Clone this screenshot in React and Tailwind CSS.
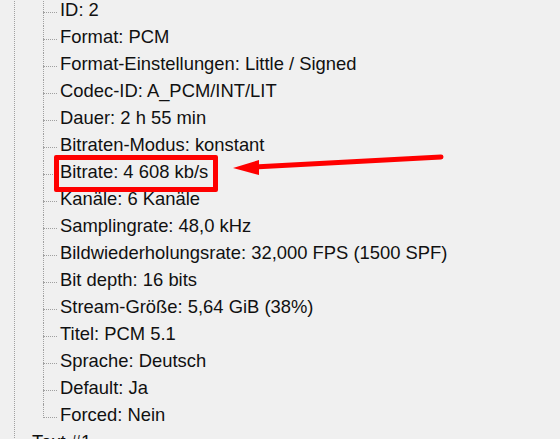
import React from 'react';

const rows = [
  'ID: 2',
  'Format: PCM',
  'Format-Einstellungen: Little / Signed',
  'Codec-ID: A_PCM/INT/LIT',
  'Dauer: 2 h 55 min',
  'Bitraten-Modus: konstant',
  'Bitrate: 4 608 kb/s',
  'Kanäle: 6 Kanäle',
  'Samplingrate: 48,0 kHz',
  'Bildwiederholungsrate: 32,000 FPS (1500 SPF)',
  'Bit depth: 16 bits',
  'Stream-Größe: 5,64 GiB (38%)',
  'Titel: PCM 5.1',
  'Sprache: Deutsch',
  'Default: Ja',
  'Forced: Nein',
];

function Row({ text, last }) {
  return (
    <div className="flex h-[27px] items-stretch">
      {/* tree connector */}
      <div className="relative w-[17px] shrink-0">
        <div
          className={`absolute left-0 top-0 border-l border-dotted border-[#a0a0a0] ${
            last ? 'h-[14px]' : 'h-full'
          }`}
        />
        <div className="absolute left-0 top-[13px] w-[14px] border-t border-dotted border-[#a0a0a0]" />
      </div>
      <span className="flex items-center whitespace-nowrap pb-[5px]">{text}</span>
    </div>
  );
}

export default function App() {
  return (
    <div
      className="relative h-[439px] w-[560px] overflow-hidden bg-[#f0f0f0] text-[18.4px] text-[#111]"
      style={{ fontFamily: '"Liberation Sans", Arial, sans-serif' }}
    >
      <div className="-mt-[1px] flex">
        <div className="w-[14px] shrink-0" />
        <div className="border-l border-dotted border-[#a0a0a0]">
          <div className="pl-[28px]">
            {rows.map((t, i) => (
              <Row key={t} text={t} last={i === rows.length - 1} />
            ))}
          </div>
          <div className="flex h-[27px] items-center">
            <div className="w-[14px] border-t border-dotted border-[#a0a0a0]" />
            <span className="ml-[3px] whitespace-nowrap pb-[5px]">Text #1</span>
          </div>
        </div>
      </div>

      {/* annotation: red box */}
      <div className="absolute left-[54px] top-[155px] h-[37px] w-[164px] rounded-[2px] border-[5px] border-[#f00]" />

      {/* annotation: arrow */}
      <svg className="absolute left-0 top-0" width="560" height="439">
        <line x1="254" y1="167" x2="441" y2="157" stroke="#f00" strokeWidth="5" strokeLinecap="round" />
        <polygon points="233,168 259,160 259,175" fill="#f00" />
      </svg>
    </div>
  );
}
